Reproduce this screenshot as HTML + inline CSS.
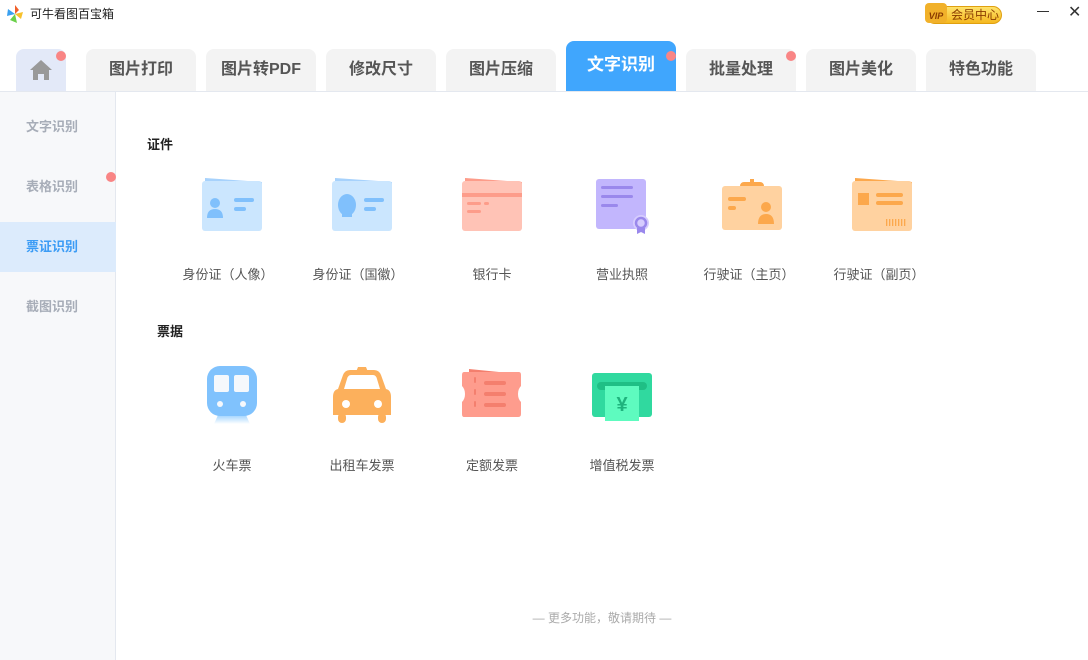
<!DOCTYPE html><html><head><meta charset="utf-8"><style>
*{margin:0;padding:0;box-sizing:border-box}
body{width:1088px;height:660px;overflow:hidden;background:#fff;font-family:"Liberation Sans","Noto Sans CJK SC",sans-serif;position:relative}
.a{position:absolute}
.tab{position:absolute;top:49px;height:42px;width:110px;background:#f3f3f3;border-radius:8px 8px 0 0;text-align:center;line-height:42px;font-size:16px;font-weight:bold;color:#555}
.dot{position:absolute;width:10px;height:10px;border-radius:50%;background:#f98585}
.side{position:absolute;left:0;width:116px;height:50px;line-height:50px;padding-left:26px;font-size:13px;font-weight:bold;color:#a7adb8}
.lbl{position:absolute;width:130px;text-align:center;font-size:13px;color:#555}
</style></head><body>
<svg class="a" style="left:5px;top:4px" width="20" height="20" viewBox="0 0 20 20"><path d="M10 1 L14 6 L10 10Z" fill="#f0602a"/><path d="M10 10 L18 8 L16 15Z" fill="#f7c12c"/><path d="M10 10 L12 19 L5 16Z" fill="#6ad04a"/><path d="M10 10 L2 12 L3 5Z" fill="#3aa0f0"/></svg>
<div class="a" style="left:30px;top:5px;font-size:12px;color:#222">可牛看图百宝箱</div>
<div class="a" style="left:926px;top:6px;width:76px;height:18px;border-radius:9px;background:linear-gradient(#ffe26a,#f5b820);border:1px solid #e0a010;font-size:12px;color:#8a3c00;line-height:16px;padding-left:24px">会员中心</div>
<div class="a" style="left:925px;top:3px;width:22px;height:20px;background:#f1b12a;border-radius:4px;font-size:9px;font-weight:bold;color:#8a3c00;line-height:26px;text-align:center;font-style:italic">VIP</div>
<div class="a" style="left:1037px;top:11px;width:12px;height:1px;background:#333"></div>
<div class="a" style="left:1068px;top:2px;font-size:16px;color:#333">✕</div>
<div class="a" style="left:16px;top:49px;width:50px;height:42px;background:#e3e9f8;border-radius:8px 8px 0 0"></div>
<svg class="a" style="left:29px;top:59px" width="24" height="22" viewBox="0 0 24 22"><path d="M12 1 L23 11 L20 11 L20 21 L15 21 L15 15 L9 15 L9 21 L4 21 L4 11 L1 11Z" fill="#999"/></svg>
<div class="dot" style="left:56px;top:51px"></div>
<div class="tab" style="left:86px">图片打印</div>
<div class="tab" style="left:206px">图片转PDF</div>
<div class="tab" style="left:326px">修改尺寸</div>
<div class="tab" style="left:446px">图片压缩</div>
<div class="tab" style="left:566px;top:41px;height:50px;line-height:48px;background:#40a6fd;color:#fff;font-size:17px">文字识别</div>
<div class="dot" style="left:666px;top:51px"></div>
<div class="tab" style="left:686px">批量处理</div>
<div class="dot" style="left:786px;top:51px"></div>
<div class="tab" style="left:806px">图片美化</div>
<div class="tab" style="left:926px">特色功能</div>
<div class="a" style="left:0;top:91px;width:1088px;height:1px;background:#e4e8ef"></div>
<div class="a" style="left:0;top:92px;width:116px;height:568px;background:#f7f8fa;border-right:1px solid #e4e8ef"></div>
<div class="side" style="top:102px">文字识别</div>
<div class="side" style="top:162px">表格识别</div>
<div class="dot" style="left:106px;top:172px"></div>
<div class="side" style="top:222px;background:#dcebfc;color:#3c9cf5">票证识别</div>
<div class="side" style="top:282px">截图识别</div>
<div class="a" style="left:147px;top:134px;font-size:13px;font-weight:bold;color:#222">证件</div>
<div class="a" style="left:157px;top:321px;font-size:13px;font-weight:bold;color:#222">票据</div>
<svg class="a" style="left:200px;top:176px" width="64" height="56"><path d="M5 2 L62 6 L62 20 L5 20Z" fill="#a7d2fc"/><rect x="2" y="5" width="60" height="50" rx="3" fill="#cbe6fe"/><circle cx="15" cy="27" r="5" fill="#80c0fc"/><path d="M7 42 Q7 33 15 33 Q23 33 23 42Z" fill="#80c0fc"/><rect x="34" y="22" width="20" height="4" rx="2" fill="#80c0fc"/><rect x="34" y="31" width="12" height="4" rx="2" fill="#80c0fc"/></svg>
<svg class="a" style="left:330px;top:176px" width="64" height="56"><path d="M5 2 L62 6 L62 20 L5 20Z" fill="#a7d2fc"/><rect x="2" y="5" width="60" height="50" rx="3" fill="#cbe6fe"/><ellipse cx="17" cy="29" rx="9" ry="11" fill="#80c0fc"/><rect x="12" y="36" width="10" height="5" fill="#80c0fc"/><rect x="34" y="22" width="20" height="4" rx="2" fill="#80c0fc"/><rect x="34" y="31" width="12" height="4" rx="2" fill="#80c0fc"/></svg>
<svg class="a" style="left:460px;top:176px" width="64" height="56"><path d="M5 2 L62 6 L62 20 L5 20Z" fill="#fd9c8a"/><rect x="2" y="5" width="60" height="50" rx="3" fill="#ffc3b6"/><rect x="2" y="17" width="60" height="4" fill="#fd9c8a"/><rect x="7" y="26" width="14" height="3" rx="1.5" fill="#fd9c8a"/><rect x="24" y="26" width="5" height="3" rx="1.5" fill="#fd9c8a"/><rect x="7" y="34" width="14" height="3" rx="1.5" fill="#fd9c8a"/></svg>
<svg class="a" style="left:590px;top:176px" width="64" height="60"><rect x="6" y="3" width="50" height="50" rx="3" fill="#c2b6fd"/><rect x="11" y="10" width="32" height="3" rx="1.5" fill="#9a88ec"/><rect x="11" y="19" width="32" height="3" rx="1.5" fill="#9a88ec"/><rect x="11" y="28" width="17" height="3" rx="1.5" fill="#9a88ec"/><circle cx="51" cy="47" r="8" fill="#d6ccfe"/><circle cx="51" cy="47" r="5" fill="none" stroke="#9a88ec" stroke-width="2.5"/><path d="M47 52 L47 58 L51 56 L55 58 L55 52Z" fill="#9a88ec"/></svg>
<svg class="a" style="left:720px;top:176px" width="64" height="60"><rect x="20" y="6" width="24" height="8" rx="4" fill="#fca84c"/><rect x="30" y="3" width="4" height="6" fill="#fca84c"/><rect x="2" y="10" width="60" height="44" rx="3" fill="#ffd2a0"/><rect x="8" y="21" width="18" height="4" rx="2" fill="#fca84c"/><rect x="8" y="30" width="8" height="4" rx="2" fill="#fca84c"/><circle cx="46" cy="31" r="5" fill="#fca84c"/><path d="M38 48 Q38 38 46 38 Q54 38 54 48Z" fill="#fca84c"/></svg>
<svg class="a" style="left:850px;top:176px" width="64" height="56"><path d="M5 2 L62 6 L62 20 L5 20Z" fill="#fca84c"/><rect x="2" y="5" width="60" height="50" rx="3" fill="#ffd2a0"/><rect x="8" y="17" width="11" height="12" fill="#fca84c"/><rect x="26" y="17" width="27" height="4" rx="2" fill="#fca84c"/><rect x="26" y="25" width="27" height="4" rx="2" fill="#fca84c"/><g fill="#fca84c"><rect x="36" y="43" width="1.3" height="7"/><rect x="39" y="43" width="1.3" height="7"/><rect x="42" y="43" width="1.3" height="7"/><rect x="45" y="43" width="1.3" height="7"/><rect x="48" y="43" width="1.3" height="7"/><rect x="51" y="43" width="1.3" height="7"/><rect x="54" y="43" width="1.3" height="7"/></g></svg>
<div class="lbl" style="left:163px;top:264px">身份证（人像）</div>
<div class="lbl" style="left:293px;top:264px">身份证（国徽）</div>
<div class="lbl" style="left:427px;top:264px">银行卡</div>
<div class="lbl" style="left:557px;top:264px">营业执照</div>
<div class="lbl" style="left:684px;top:264px">行驶证（主页）</div>
<div class="lbl" style="left:814px;top:264px">行驶证（副页）</div>
<svg class="a" style="left:206px;top:366px" width="52" height="58"><defs><linearGradient id="g" x1="0" y1="0" x2="0" y2="1"><stop offset="0" stop-color="#9ed2ff"/><stop offset="1" stop-color="#fff"/></linearGradient></defs><path d="M12 49 L40 49 L44 58 L8 58Z" fill="url(#g)"/><rect x="1" y="0" width="50" height="50" rx="13" fill="#80c2fd"/><rect x="8" y="9" width="15" height="17" rx="2" fill="#f5f8fc"/><rect x="28" y="9" width="15" height="17" rx="2" fill="#f5f8fc"/><circle cx="14" cy="38" r="3" fill="#f5f8fc"/><circle cx="37" cy="38" r="3" fill="#f5f8fc"/></svg>
<svg class="a" style="left:332px;top:367px" width="60" height="56"><path d="M26 0 L34 0 L36 5 L24 5Z" fill="#fcb05c"/><path d="M11 8 Q13 3 18 3 L42 3 Q47 3 49 8 L54 22 Q59 23 59 30 L59 48 L1 48 L1 30 Q1 23 6 22Z" fill="#fcb05c"/><path d="M15 12 Q16 8 19 8 L41 8 Q44 8 45 12 L48 22 L12 22Z" fill="#fff"/><circle cx="14" cy="37" r="4" fill="#fff"/><circle cx="46" cy="37" r="4" fill="#fff"/><rect x="6" y="46" width="8" height="10" rx="4" fill="#fcb05c"/><rect x="46" y="46" width="8" height="10" rx="4" fill="#fcb05c"/></svg>
<svg class="a" style="left:461px;top:367px" width="62" height="52"><path d="M8 2 L58 7 L58 20 L8 20Z" fill="#f47f6e"/><path d="M3 5 L58 5 Q60 5 60 8 L60 19 Q57 22 57 27 Q57 32 60 35 L60 47 Q60 50 57 50 L3 50 Q1 50 1 47 L1 35 Q4 32 4 27 Q4 22 1 19 L1 8 Q1 5 3 5Z" fill="#fe9c8d"/><g fill="#f47f6e"><rect x="13" y="10" width="2" height="6" rx="1"/><rect x="13" y="22" width="2" height="6" rx="1"/><rect x="13" y="34" width="2" height="6" rx="1"/><rect x="23" y="14" width="22" height="4" rx="2"/><rect x="23" y="25" width="22" height="4" rx="2"/><rect x="23" y="36" width="22" height="4" rx="2"/></g></svg>
<svg class="a" style="left:591px;top:372px" width="62" height="50"><rect x="1" y="1" width="60" height="44" rx="3" fill="#30d99f"/><rect x="6" y="10" width="50" height="8" rx="4" fill="#1fbf85"/><rect x="14" y="14" width="34" height="35" fill="#5efbbf"/><text x="31" y="39" text-anchor="middle" font-size="20" font-weight="bold" fill="#1fb37d" font-family="Liberation Sans,sans-serif">¥</text></svg>
<div class="lbl" style="left:167px;top:455px">火车票</div>
<div class="lbl" style="left:297px;top:455px">出租车发票</div>
<div class="lbl" style="left:427px;top:455px">定额发票</div>
<div class="lbl" style="left:557px;top:455px">增值税发票</div>
<div class="a" style="left:116px;top:609px;width:972px;text-align:center;font-size:12px;color:#aaa">— 更多功能，敬请期待 —</div>
</body></html>
